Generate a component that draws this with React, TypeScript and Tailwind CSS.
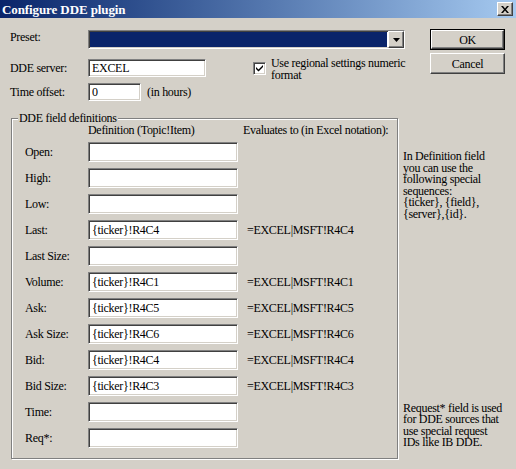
import type { ReactNode } from 'react';

const sunken =
  'border border-t-[#808080] border-l-[#808080] border-r-white border-b-white shadow-[inset_1px_1px_0_#404040,inset_-1px_-1px_0_#d4d0c8]';
const raised =
  'border border-t-white border-l-white border-r-[#404040] border-b-[#404040] shadow-[inset_-1px_-1px_0_#808080,inset_1px_1px_0_#d4d0c8] bg-[#d4d0c8]';

const rows: { label: string; def: string; evalTo: string }[] = [
  { label: 'Open:', def: '', evalTo: '' },
  { label: 'High:', def: '', evalTo: '' },
  { label: 'Low:', def: '', evalTo: '' },
  { label: 'Last:', def: '{ticker}!R4C4', evalTo: '=EXCEL|MSFT!R4C4' },
  { label: 'Last Size:', def: '', evalTo: '' },
  { label: 'Volume:', def: '{ticker}!R4C1', evalTo: '=EXCEL|MSFT!R4C1' },
  { label: 'Ask:', def: '{ticker}!R4C5', evalTo: '=EXCEL|MSFT!R4C5' },
  { label: 'Ask Size:', def: '{ticker}!R4C6', evalTo: '=EXCEL|MSFT!R4C6' },
  { label: 'Bid:', def: '{ticker}!R4C4', evalTo: '=EXCEL|MSFT!R4C4' },
  { label: 'Bid Size:', def: '{ticker}!R4C3', evalTo: '=EXCEL|MSFT!R4C3' },
  { label: 'Time:', def: '', evalTo: '' },
  { label: 'Req*:', def: '', evalTo: '' },
];

function TextBox({ value, className }: { value: string; className: string }) {
  return (
    <div className={`${sunken} ${className} flex items-center bg-white pl-[3px] whitespace-nowrap`}>
      {value}
    </div>
  );
}

function Button({ children, isDefault }: { children: ReactNode; isDefault?: boolean }) {
  if (isDefault) {
    return (
      <div className="h-[21px] w-[75px] border border-black">
        <div className={`${raised} flex h-full w-full items-center justify-center`}>{children}</div>
      </div>
    );
  }
  return <div className={`${raised} flex h-[21px] w-[75px] items-center justify-center`}>{children}</div>;
}

function TitleBar() {
  return (
    <div className="flex h-[18px] items-center justify-between bg-linear-to-r from-[#0a246a] to-[#a6caf0] pl-[2px] pr-[3px]">
      <span className="text-[13px] font-bold leading-none tracking-[-0.1px] text-white">Configure DDE plugin</span>
      <div className={`${raised} flex h-[14px] w-[16px] items-center justify-center`}>
        <svg width="8" height="7" viewBox="0 0 8 7">
          <path d="M0 0h2l2 2.5L6 0h2L5 3.5 8 7H6L4 4.5 2 7H0l3-3.5z" fill="#000" />
        </svg>
      </div>
    </div>
  );
}

export default function App() {
  return (
    <div className="h-[469px] w-[516px] overflow-hidden bg-[#d4d0c8] font-['Liberation_Serif',serif] text-[12px] leading-[14px] tracking-[-0.3px] text-black">
      <TitleBar />

      {/* Top settings + buttons */}
      <div className="flex">
        <div className="flex w-[430px] flex-col pl-[10px] pt-[12px]">
          <div className="flex h-[19px]">
            <span className="w-[78px] pt-[0px]">Preset:</span>
            <div className={`${sunken} flex w-[317px] bg-white`}>
              <div className="m-[1px] flex-1 bg-[#0a246a]" />
              <div className={`${raised} flex w-[16px] items-center justify-center`}>
                <svg width="7" height="4" viewBox="0 0 7 4">
                  <path d="M0 0h7L3.5 4z" fill="#000" />
                </svg>
              </div>
            </div>
          </div>

          <div className="mt-[10px] flex h-[18px] items-start">
            <span className="flex h-[18px] w-[78px] items-center">DDE server:</span>
            <TextBox value="EXCEL" className="h-[18px] w-[118px]" />
            <div className="-mt-[2px] ml-[47px] flex items-start">
              <div className={`${sunken} mt-[5px] flex h-[13px] w-[13px] items-center justify-center bg-white`}>
                <svg width="7" height="7" viewBox="0 0 7 7">
                  <path d="M0 2l2.5 2.5L7 0v2L2.5 6.5 0 4z" fill="#000" />
                </svg>
              </div>
              <span className="ml-[5px] leading-[12px]">
                Use regional settings numeric
                <br />
                format
              </span>
            </div>
          </div>

          <div className="mt-[6px] flex h-[18px] items-center">
            <span className="w-[78px]">Time offset:</span>
            <TextBox value="0" className="h-[18px] w-[53px]" />
            <span className="ml-[6px]">(in hours)</span>
          </div>
        </div>

        <div className="flex flex-col gap-[3px] pt-[11px]">
          <Button isDefault>OK</Button>
          <Button>Cancel</Button>
        </div>
      </div>

      {/* Field definitions + notes */}
      <div className="mt-[17px] flex">
        <div className="relative ml-[11px] h-[341px] w-[387px] border border-[#808080] shadow-[inset_1px_1px_0_#fff,1px_1px_0_#fff]">
          <span className="absolute -top-[8px] left-[6px] bg-[#d4d0c8] px-[1px]">DDE field definitions</span>

          <div className="flex pl-[76px] pt-[4px]">
            <span className="w-[155px]">Definition (Topic!Item)</span>
            <span>Evaluates to (in Excel notation):</span>
          </div>

          <div className="mt-[5px] flex flex-col gap-[6px] pl-[13px]">
            {rows.map((r) => (
              <div key={r.label} className="flex h-[20px] items-center">
                <span className="w-[63px]">{r.label}</span>
                <TextBox value={r.def} className="h-[20px] w-[150px]" />
                <span className="ml-[9px]">{r.evalTo}</span>
              </div>
            ))}
          </div>
        </div>

        <div className="ml-[5px] flex flex-col leading-[11.6px]">
          <p className="mt-[33px]">
            In Definition field
            <br />
            you can use the
            <br />
            following special
            <br />
            sequences:
            <br />
            {'{ticker}, {field},'}
            <br />
            {'{server},{id}.'}
          </p>
          <p className="mt-[182px]">
            Request* field is used
            <br />
            for DDE sources that
            <br />
            use special request
            <br />
            IDs like IB DDE.
          </p>
        </div>
      </div>
    </div>
  );
}
